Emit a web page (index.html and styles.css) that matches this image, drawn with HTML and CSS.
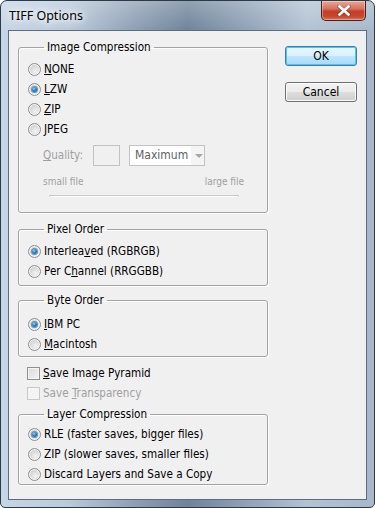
FILE: index.html
```html
<!DOCTYPE html>
<html lang="en">
<head>
    <meta charset="UTF-8">
    <meta name="viewport" content="width=device-width, initial-scale=1.0">
    <title>TIFF Options</title>
    <link rel="stylesheet" href="styles.css">
</head>
<body>

<div class="window">
    <div class="titlebar">
        <span class="title">TIFF Options</span>
        <button class="close" aria-label="Close">
            <svg width="14" height="11" viewBox="0 0 14 11">
                <path d="M2 1.5 L12 9.5 M12 1.5 L2 9.5" stroke="#5a2018" stroke-width="4" stroke-linecap="square" opacity="0.35"/>
                <path d="M2.5 1.5 L11.5 9.5 M11.5 1.5 L2.5 9.5" stroke="#ffffff" stroke-width="2.6" stroke-linecap="square"/>
            </svg>
        </button>
    </div>

    <div class="client">
        <div class="main">
            <fieldset class="group">
                <legend>Image Compression</legend>
                <label class="opt"><span class="radio"></span><span><u>N</u>ONE</span></label>
                <label class="opt"><span class="radio checked"></span><span><u>L</u>ZW</span></label>
                <label class="opt"><span class="radio"></span><span><u>Z</u>IP</span></label>
                <label class="opt"><span class="radio"></span><span><u>J</u>PEG</span></label>
                <div class="quality">
                    <span class="muted"><u>Q</u>uality:</span>
                    <span class="qbox"></span>
                    <span class="select">
                        <span class="select-text">Maximum</span>
                        <span class="select-arrow"></span>
                    </span>
                </div>
                <div class="sizes">
                    <span>small file</span>
                    <span>large file</span>
                </div>
                <div class="slider"></div>
            </fieldset>

            <fieldset class="group pixel">
                <legend>Pixel Order</legend>
                <label class="opt"><span class="radio checked"></span><span>Interlea<u>v</u>ed (RGBRGB)</span></label>
                <label class="opt"><span class="radio"></span><span>Per C<u>h</u>annel (RRGGBB)</span></label>
            </fieldset>

            <fieldset class="group byte">
                <legend>Byte Order</legend>
                <label class="opt"><span class="radio checked"></span><span><u>I</u>BM PC</span></label>
                <label class="opt"><span class="radio"></span><span><u>M</u>acintosh</span></label>
            </fieldset>

            <div class="checks">
                <label class="opt"><span class="check"></span><span><u>S</u>ave Image Pyramid</span></label>
                <label class="opt disabled"><span class="check"></span><span>Save <u>T</u>ransparency</span></label>
            </div>

            <fieldset class="group layer">
                <legend>Layer Compression</legend>
                <label class="opt"><span class="radio checked"></span><span>RLE (faster saves, bigger files)</span></label>
                <label class="opt"><span class="radio"></span><span>ZIP (slower saves, smaller files)</span></label>
                <label class="opt"><span class="radio"></span><span>Discard Layers and Save a Copy</span></label>
            </fieldset>
        </div>

        <div class="side">
            <button class="btn default">OK</button>
            <button class="btn">Cancel</button>
        </div>
    </div>
</div>

</body>
</html>
```

FILE: styles.css
```css
body {
    margin: 0;
    font-family: "DejaVu Sans", "Liberation Sans", sans-serif;
    font-stretch: condensed;
    font-size: 11.6px;
    color: #000;
}
.window {
    width: 375px;
    height: 508px;
    box-sizing: border-box;
    border: 1px solid #2c3947;
    border-radius: 7px 7px 5px 5px;
    padding: 0 7px 7px 7px;
    display: flex;
    flex-direction: column;
    background:
        linear-gradient(180deg, rgba(255,255,255,0.25) 0%, rgba(255,255,255,0) 30px),
        linear-gradient(90deg, #c6d6e6 0%, #b9cadb 18%, #8d9fb3 36%, #6f8399 50%, #8fa2b6 66%, #b2c3d4 82%, #a6b8ca 100%);
}
.titlebar {
    height: 29px;
    display: flex;
    justify-content: space-between;
    align-items: flex-start;
}
.title {
    font-family: "Noto Sans", "Liberation Sans", sans-serif;
    font-stretch: normal;
    font-size: 12.5px;
    margin: 6px 0 0 1px;
    text-shadow: 0 0 6px #fff, 0 0 10px #fff, 0 0 14px #fff;
}
.close {
    width: 45px;
    height: 20px;
    margin: 0 1px 0 0;
    padding: 0;
    border: 1px solid #4c1f19;
    border-top: none;
    border-radius: 0 0 5px 5px;
    background: linear-gradient(180deg, #e9a99a 0%, #d8725e 40%, #c0402a 55%, #c5452d 80%, #d9735a 100%);
    box-shadow: inset 0 0 0 1px rgba(255,255,255,0.35);
    display: flex;
    align-items: center;
    justify-content: center;
}
.client {
    flex: 1;
    display: flex;
    align-items: flex-start;
    background: #f0f0f0;
    border: 1px solid #5d6d7e;
    padding: 9px 0 0 9px;
}
.main {
    width: 250px;
}
.group {
    margin: 0 0 9px;
    padding: 5px 0 4px 9px;
    border: 1px solid #a3a3a3;
    border-radius: 3px;
    box-shadow: 1px 1px 0 #fff, inset 1px 1px 0 #fff;
}
.group.pixel {
    padding-top: 5px;
    margin-bottom: 7px;
}
.group.byte {
    padding: 7px 0 2px 9px;
}
.group.layer {
    padding: 3px 0 0 9px;
    margin-bottom: 0;
}
legend {
    margin-left: 16px;
    padding: 0 3px;
    line-height: 14px;
}
.opt {
    display: flex;
    align-items: center;
    gap: 3px;
    height: 20px;
}
.radio {
    width: 11px;
    height: 11px;
    border-radius: 50%;
    border: 1px solid #8e8f8f;
    background: radial-gradient(circle at 60% 65%, #f4f4f4 0%, #d6d6d6 55%, #c9c9c9 100%);
    box-shadow: inset 0 0 0 1px #f7f7f7;
    position: relative;
}
.radio.checked::after {
    content: "";
    position: absolute;
    left: 3px;
    top: 3px;
    width: 5px;
    height: 5px;
    border-radius: 50%;
    background: radial-gradient(circle at 40% 35%, #9bd5f7 0%, #2a7fc2 45%, #0d4b85 100%);
    box-shadow: 0 0 0 1px #5f95c2;
}
.check {
    width: 11px;
    height: 11px;
    border: 1px solid #8e8f8f;
    background: linear-gradient(135deg, #dcdcdc 0%, #f2f2f2 100%);
    box-shadow: inset 0 0 0 1px #f4f4f4;
}
.checks {
    padding: 0 0 0 9px;
    margin: -3px 0 4px;
}
.disabled {
    color: #a0a0a0;
}
.disabled .check {
    border-color: #c8c8c8;
    background: #f4f4f4;
}
.muted {
    color: #a0a0a0;
}
.quality {
    display: flex;
    align-items: center;
    height: 24px;
    margin: 4px 0 0 15px;
}
.qbox {
    width: 25px;
    height: 19px;
    margin-left: 10px;
    border: 1px solid #c2c2c2;
    background: #f0f0f0;
}
.select {
    display: flex;
    width: 74px;
    height: 19px;
    margin-left: 9px;
    border: 1px solid #c2c2c2;
    background: #f4f4f4;
}
.select-text {
    width: 56px;
    padding-left: 5px;
    line-height: 19px;
    color: #5f5f5f;
    background: #fff;
    font-size: 12px;
}
.select-arrow {
    flex: 1;
    position: relative;
}
.select-arrow::after {
    content: "";
    position: absolute;
    left: 4px;
    top: 8px;
    border-left: 4px solid transparent;
    border-right: 4px solid transparent;
    border-top: 4px solid #a8a8a8;
}
.sizes {
    display: flex;
    justify-content: space-between;
    width: 201px;
    margin: 9px 0 0 15px;
    font-size: 10px;
    color: #a0a0a0;
}
.slider {
    width: 188px;
    height: 1px;
    margin: 8px 0 11px 21px;
    background: #c8c8c8;
    border-bottom: 1px solid #fff;
    border-left: 1px solid #c8c8c8;
    border-right: 1px solid #c8c8c8;
}
.side {
    display: flex;
    flex-direction: column;
    gap: 16px;
    margin: 6px 0 0 17px;
}
.btn {
    width: 72px;
    height: 20px;
    padding: 0;
    font-family: inherit;
    font-stretch: condensed;
    font-size: 12px;
    border: 1px solid #707070;
    border-radius: 3px;
    background: linear-gradient(180deg, #f2f2f2 0%, #ebebeb 50%, #dddddd 51%, #cfcfcf 100%);
    box-shadow: inset 0 0 0 1px #fbfbfb;
    color: #000;
}
.btn.default {
    border-color: #3c7fb1;
    background: linear-gradient(180deg, #eaf6fd 0%, #d9f0fc 50%, #bee6fd 51%, #a7d9f5 100%);
    box-shadow: inset 0 0 0 1px #48c6f6;
}
```
